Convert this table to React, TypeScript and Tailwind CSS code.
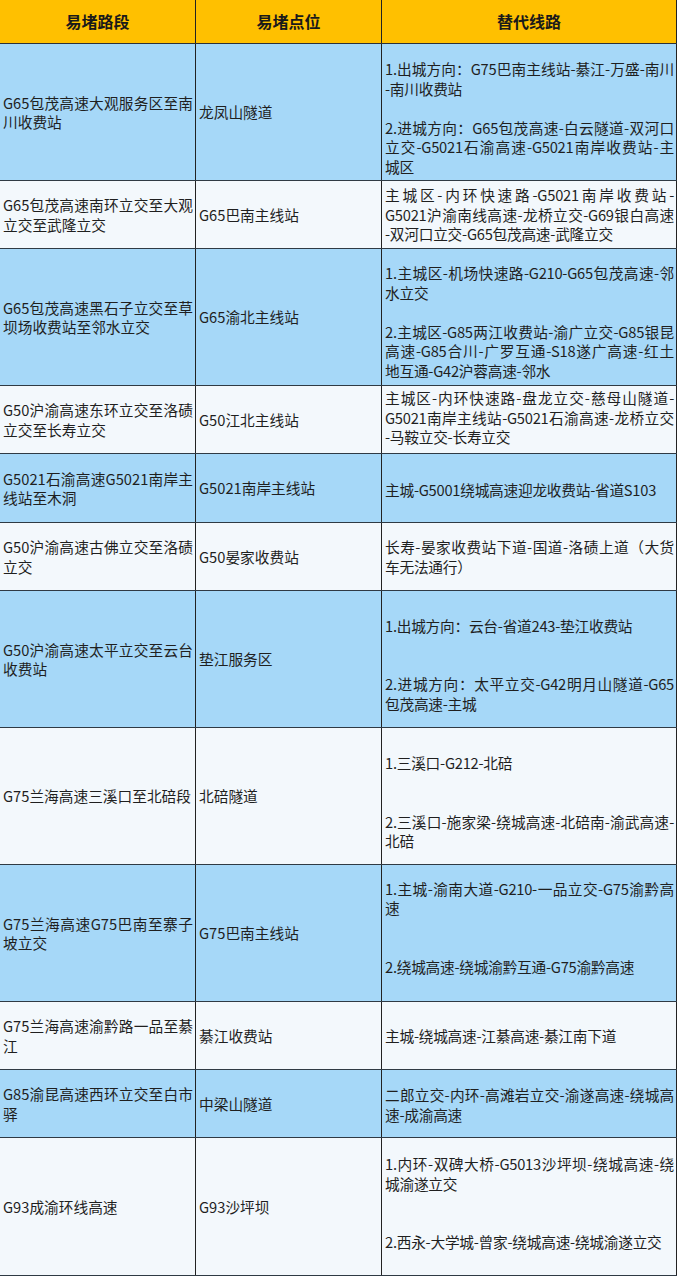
import React from "react";

type Row = {
  bg: string;
  h: string;
  c1: string[];
  c2: string;
  c3: (string | null)[];
  shift: string;
};

const BLUE = "bg-[#a6d8f8]";
const LIGHT = "bg-[#f3f8fc]";

const rows: Row[] = [
  {
    bg: BLUE,
    h: "h-[137px]",
    c1: ["G65包茂高速大观服务区至南", "川收费站"],
    c2: "龙凤山隧道",
    c3: [
      "1.出城方向：G75巴南主线站-綦江-万盛-南川",
      "-南川收费站",
      null,
      "2.进城方向：G65包茂高速-白云隧道-双河口",
      "立交-G5021石渝高速-G5021南岸收费站-主",
      "城区",
    ],
    shift: "pt-[11px]",
  },
  {
    bg: LIGHT,
    h: "h-[68px]",
    c1: ["G65包茂高速南环立交至大观", "立交至武隆立交"],
    c2: "G65巴南主线站",
    c3: [
      "主城区-内环快速路-G5021南岸收费站-",
      "G5021沪渝南线高速-龙桥立交-G69银白高速",
      "-双河口立交-G65包茂高速-武隆立交",
    ],
    shift: "pt-[0px]",
  },
  {
    bg: BLUE,
    h: "h-[137px]",
    c1: ["G65包茂高速黑石子立交至草", "坝场收费站至邻水立交"],
    c2: "G65渝北主线站",
    c3: [
      "1.主城区-机场快速路-G210-G65包茂高速-邻",
      "水立交",
      null,
      "2.主城区-G85两江收费站-渝广立交-G85银昆",
      "高速-G85合川-广罗互通-S18遂广高速-红土",
      "地互通-G42沪蓉高速-邻水",
    ],
    shift: "pt-[9px]",
  },
  {
    bg: LIGHT,
    h: "h-[68px]",
    c1: ["G50沪渝高速东环立交至洛碛", "立交至长寿立交"],
    c2: "G50江北主线站",
    c3: [
      "主城区-内环快速路-盘龙立交-慈母山隧道-",
      "G5021南岸主线站-G5021石渝高速-龙桥立交",
      "-马鞍立交-长寿立交",
    ],
    shift: "pb-[4px]",
  },
  {
    bg: BLUE,
    h: "h-[69px]",
    c1: ["G5021石渝高速G5021南岸主", "线站至木洞"],
    c2: "G5021南岸主线站",
    c3: ["主城-G5001绕城高速迎龙收费站-省道S103"],
    shift: "pt-[3px]",
  },
  {
    bg: LIGHT,
    h: "h-[68px]",
    c1: ["G50沪渝高速古佛立交至洛碛", "立交"],
    c2: "G50晏家收费站",
    c3: ["长寿-晏家收费站下道-国道-洛碛上道（大货", "车无法通行）"],
    shift: "pt-[0px]",
  },
  {
    bg: BLUE,
    h: "h-[137px]",
    c1: ["G50沪渝高速太平立交至云台", "收费站"],
    c2: "垫江服务区",
    c3: [
      "1.出城方向：云台-省道243-垫江收费站",
      null,
      null,
      "2.进城方向：太平立交-G42明月山隧道-G65",
      "包茂高速-主城",
    ],
    shift: "pt-[11px]",
  },
  {
    bg: LIGHT,
    h: "h-[137px]",
    c1: ["G75兰海高速三溪口至北碚段"],
    c2: "北碚隧道",
    c3: [
      "1.三溪口-G212-北碚",
      null,
      null,
      "2.三溪口-施家梁-绕城高速-北碚南-渝武高速-",
      "北碚",
    ],
    shift: "pt-[12px]",
  },
  {
    bg: BLUE,
    h: "h-[137px]",
    c1: ["G75兰海高速G75巴南至寨子", "坡立交"],
    c2: "G75巴南主线站",
    c3: [
      "1.主城-渝南大道-G210-一品立交-G75渝黔高",
      "速",
      null,
      null,
      "2.绕城高速-绕城渝黔互通-G75渝黔高速",
    ],
    shift: "pb-[11px]",
  },
  {
    bg: LIGHT,
    h: "h-[68px]",
    c1: ["G75兰海高速渝黔路一品至綦", "江"],
    c2: "綦江收费站",
    c3: ["主城-绕城高速-江綦高速-綦江南下道"],
    shift: "pt-[0px]",
  },
  {
    bg: BLUE,
    h: "h-[68px]",
    c1: ["G85渝昆高速西环立交至白市", "驿"],
    c2: "中梁山隧道",
    c3: ["二郎立交-内环-高滩岩立交-渝遂高速-绕城高", "速-成渝高速"],
    shift: "pt-[2px]",
  },
  {
    bg: LIGHT,
    h: "h-[138px]",
    c1: ["G93成渝环线高速"],
    c2: "G93沙坪坝",
    c3: [
      "1.内环-双碑大桥-G5013沙坪坝-绕城高速-绕",
      "城渝遂立交",
      null,
      null,
      "2.西永-大学城-曾家-绕城高速-绕城渝遂立交",
    ],
    shift: "pb-[7px]",
  },
];

function Lines({ lines }: { lines: (string | null)[] }) {
  return (
    <>
      {lines.map((l, i) => {
        if (l === null) return <div key={i} className="h-[19.5px]" />;
        const next = lines[i + 1];
        const justify = typeof next === "string";
        return (
          <div
            key={i}
            className={
              justify
                ? "text-justify [text-align-last:justify]"
                : "text-left"
            }
          >
            {l}
          </div>
        );
      })}
    </>
  );
}

export default function App() {
  return (
    <div className="w-[677px] bg-white font-['Noto_Sans_CJK_SC','Noto_Sans',sans-serif] text-[14.7px] leading-[19.5px] text-[#1f1f1f]">
      <div className="grid h-[44px] grid-cols-[196px_186px_295px] border-b border-[#2c3136] bg-[#ffc000] text-[16px] font-bold text-[#1a1a1a]">
        <div className="flex items-center justify-center border-r border-[#222]">易堵路段</div>
        <div className="flex items-center justify-center border-r border-[#222]">易堵点位</div>
        <div className="flex items-center justify-center border-r border-[#222]">替代线路</div>
      </div>
      {rows.map((r, i) => (
        <div
          key={i}
          className={`grid grid-cols-[196px_186px_295px] border-b border-[#2f3a44] ${r.bg} ${r.h}`}
        >
          <div className="flex flex-col justify-center border-r border-[#222] pl-[3px] pr-[2px]">
            <Lines lines={r.c1} />
          </div>
          <div className="flex flex-col justify-center border-r border-[#222] pl-[3px] pr-[2px]">
            <div>{r.c2}</div>
          </div>
          <div className={`flex flex-col justify-center border-r border-[#222] pl-[3px] pr-[2px] tracking-[-0.25px] ${r.shift}`}>
            <Lines lines={r.c3} />
          </div>
        </div>
      ))}
    </div>
  );
}
